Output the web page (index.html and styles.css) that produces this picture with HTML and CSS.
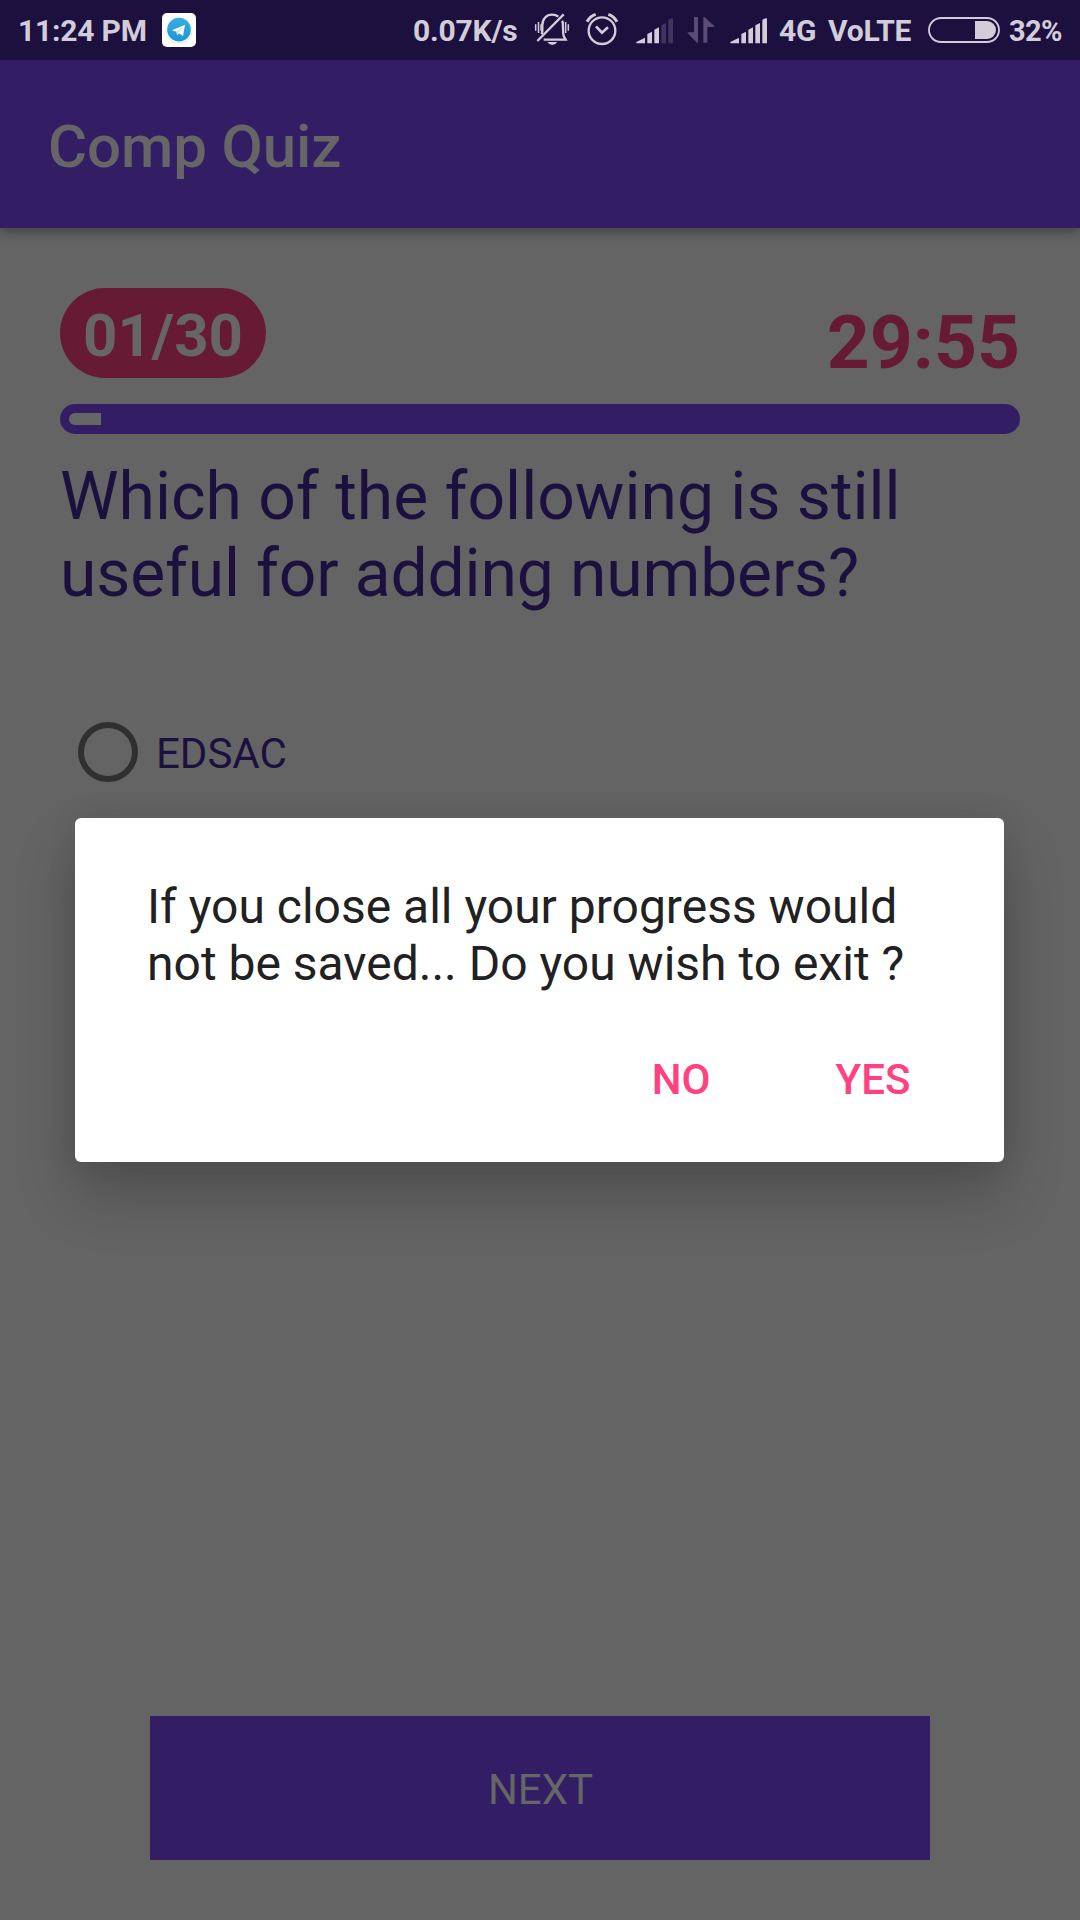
FILE: index.html
```html
<!DOCTYPE html>
<html lang="en">
<head>
<meta charset="utf-8">
<title>Comp Quiz</title>
<link rel="stylesheet" href="styles.css">
</head>
<body>
<div class="screen">
  <header class="status-bar">
    <span class="status-text clock">11:24 PM</span>
    <svg class="telegram" width="34" height="34" viewBox="0 0 102 102">
      <defs><linearGradient id="sky" x1="0" y1="0" x2="0" y2="1"><stop offset="0" stop-color="#37aee2"/><stop offset="1" stop-color="#1e96d4"/></linearGradient></defs>
      <rect width="102" height="102" rx="15" fill="#fff"/>
      <circle cx="51" cy="52" r="40" fill="#e9edf0"/>
      <circle cx="51" cy="50" r="38" fill="#fff"/>
      <circle cx="51" cy="50" r="35.500" fill="url(#sky)"/>
      <path d="M30 52L69 35L63 69L51 61L46 67L43 56Z" fill="#fff"/>
      <path d="M43 56L63 41L49 59L46 67Z" fill="#c9dfed"/>
    </svg>
    <span class="status-text speed">0.07K/s</span>
    <svg class="bell" width="36" height="34" viewBox="402 36 108 102" fill="none" stroke="#d3cdda" stroke-width="7">
      <path d="M425 103C428 96 427 86 427 76C427 56 440 44 456 44C464 44 470 46 475 50M487 62C491 76 487 94 491 108L497 119H431"/>
      <path d="M412 123L491 43"/>
      <path d="M407 73V92M415.500 66V99M423 73V92M489 66V99M497 66V99M505 73V92" stroke-width="4.500"/>
      <path d="M442 126H472Q466 135 457 135Q448 135 442 126Z" fill="#d3cdda" stroke="none"/>
    </svg>
    <svg class="alarm" width="34" height="34" viewBox="555 36 102 102" fill="none" stroke="#d3cdda" stroke-width="7">
      <circle cx="606" cy="92" r="40"/>
      <path d="M588 79L606 98L624 82" stroke-width="8"/>
      <path d="M561 65Q570 49 587 43M625 43Q642 49 651 65" stroke-width="9"/>
    </svg>
    <svg class="signal" width="38" height="26" viewBox="0 0 114 78" fill="#d3cdda">
      <path d="M1 76V72L27 59V76ZM34 76V48L48 41V76ZM55 76V35L69 28V76Z"/>
      <path d="M76 76V22L90 15V76ZM97 76V8Q97 2 111 1V76Z" fill="#41345f"/>
    </svg>
    <svg class="transfer" width="28" height="28" viewBox="0 0 84 84" fill="#5a4c76">
      <path d="M21 3H33V80H30L2 52V49H21ZM49 80V3H52L82 30V33H61V80Z"/>
    </svg>
    <svg class="signal signal-full" width="38" height="26" viewBox="0 0 114 78" fill="#d3cdda">
      <path d="M1 76V72L27 59V76ZM34 76V48L48 41V76ZM55 76V35L69 28V76ZM76 76V22L90 15V76ZM97 76V8Q97 2 111 1V76Z"/>
    </svg>
    <span class="status-text network">4G</span>
    <span class="status-text volte">VoLTE</span>
    <svg class="battery" width="72" height="26" viewBox="0 0 216 78">
      <rect x="3" y="3" width="210" height="72" rx="36" fill="none" stroke="#d3cdda" stroke-width="5.500"/>
      <path d="M141 12H177A27 27 0 0 1 177 66H141Z" fill="#d3cdda"/>
    </svg>
    <span class="status-text percent">32%</span>
  </header>

  <div class="app-bar"><h1 class="app-title">Comp Quiz</h1></div>

  <main class="quiz">
    <div class="quiz-head">
      <span class="counter">01/30</span>
      <span class="timer">29:55</span>
    </div>
    <div class="progress"><div class="progress-value"></div></div>
    <p class="question">Which of the following is still<br><span class="question-end">useful for adding numbers?</span></p>
    <div class="option"><span class="radio"></span><span class="option-label">EDSAC</span></div>
    <button class="next">NEXT</button>
  </main>

  <section class="dialog" role="dialog">
    <p class="message">If you close all your progress would<br>not be saved... Do you wish to exit ?</p>
    <div class="actions"><button class="action no">NO</button><button class="action yes">YES</button></div>
  </section>
</div>
</body>
</html>
```
FILE: styles.css
```css
* { box-sizing: border-box; margin: 0; padding: 0; }
body { width: 1080px; height: 1920px; overflow: hidden; font-family: Roboto, sans-serif; background: #646464; }
button { border: 0; background: none; font-family: inherit; }
svg { display: block; flex: none; }
.screen { position: relative; display: flex; flex-direction: column; width: 1080px; height: 1920px; background: #646464; }

.status-bar { display: flex; align-items: center; height: 60px; padding-left: 18px; background: #1c103f; z-index: 2; }
.status-text { flex: none; padding-top: 2px; font-size: 30px; font-weight: 700; line-height: 58px; letter-spacing: -.2px; white-space: nowrap; color: #d3cdda; }
.clock { width: 144px; }
.speed { width: 121px; margin-left: 217px; }
.bell { margin-top: -2px; }
.alarm { margin-top: -2px; margin-left: 15px; }
.signal { margin-top: 1px; margin-left: 17px; }
.transfer { margin-left: 13px; }
.signal-full { margin-left: 15px; }
.network { width: 49px; margin-left: 11px; }
.volte { width: 100px; }
.percent { margin-left: 9px; font-size: 29px; letter-spacing: -.6px; }

.app-bar { height: 168px; padding: 5px 48px 0; background: #331e65; box-shadow: 0 3px 12px rgba(0, 0, 0, .4); z-index: 1; }
.app-title { font-size: 60px; font-weight: 500; line-height: 163px; letter-spacing: -.1px; color: #666; }

.quiz { display: flex; flex-direction: column; flex: 1; padding: 60px 60px; }
.quiz-head { display: flex; justify-content: space-between; height: 90px; }
.counter { width: 206px; padding-top: 5px; border-radius: 45px; background: #661a33; color: #666; font-size: 60px; font-weight: 700; line-height: 85px; text-align: center; }
.timer { padding-top: 10px; font-size: 75px; font-weight: 700; line-height: 89px; color: #661a33; }
.progress { height: 30px; margin-top: 26px; padding: 9px; border-radius: 15px; background: #331e65; }
.progress-value { width: 32px; height: 12px; border-radius: 6px 0 0 6px; background: #666; }
.question { margin-top: 24px; font-size: 66px; line-height: 77px; color: #1c103f; white-space: nowrap; }
.question-end { letter-spacing: -.16px; }
.option { display: flex; align-items: center; height: 60px; margin-top: 110px; padding-left: 18px; }
.radio { width: 60px; height: 60px; border: 6px solid #303030; border-radius: 50%; }
.option-label { padding: 3px 0 0 18px; font-size: 42px; line-height: 60px; color: #1c103f; }
.next { width: 780px; height: 144px; margin: auto auto 0; padding: 3px 0 0 1px; background: #331e65; font-size: 42px; color: #666; }

.dialog { position: absolute; left: 75px; top: 818px; width: 929px; height: 344px; padding: 60px 72px 0; border-radius: 6px; background: #fff; box-shadow: 0 32px 60px rgba(0, 0, 0, .22), 0 0 30px rgba(0, 0, 0, .08); z-index: 3; }
.message { font-size: 48px; line-height: 57px; color: #212121; white-space: nowrap; }
.actions { display: flex; justify-content: flex-end; height: 144px; margin-top: 15px; }
.action { width: 192px; font-size: 42px; font-weight: 500; color: #ff4081; }
.yes { margin-right: -37px; }
```
